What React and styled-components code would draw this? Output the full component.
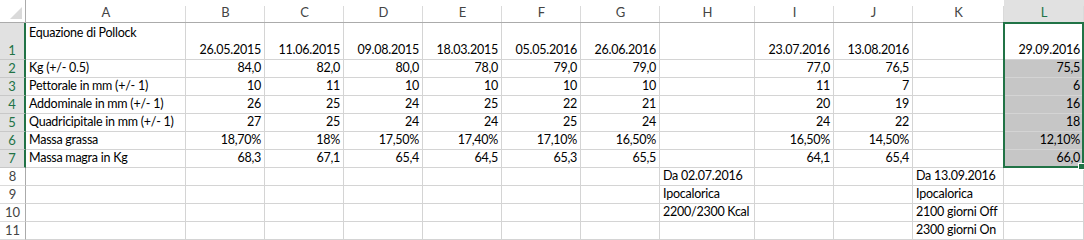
import React from 'react';
import styled, { createGlobalStyle } from 'styled-components';

const GRID = '#d4d4d4';
const HEAD_LINE = '#ababab';
const GREEN = '#217346';

const GlobalStyle = createGlobalStyle`
  *, *::before, *::after { box-sizing: border-box; }
  html, body { margin: 0; padding: 0; background: #fff; }
  body { font-family: Lato, "Liberation Sans", sans-serif; }
`;

const Sheet = styled.div`
  position: relative;
  display: grid;
  grid-template-columns: ${(p) => p.$cols};
  grid-template-rows: ${(p) => p.$rows};
  width: 1084px;
  font-family: Lato, "Liberation Sans", sans-serif;
  font-size: 12.5px;
  letter-spacing: -0.25px;
  color: #000;
  overflow: hidden;
`;

const Corner = styled.div`
  position: relative;
  border-right: 1px solid ${HEAD_LINE};
  border-bottom: 1px solid ${HEAD_LINE};
  &::after {
    content: '';
    position: absolute;
    right: 3px;
    bottom: 3px;
    border-left: 12px solid transparent;
    border-bottom: 12px solid #dadada;
  }
`;

const ColHeader = styled.div`
  position: relative;
  display: flex;
  align-items: center;
  justify-content: center;
  padding-top: 2px;
  font-size: 13px;
  letter-spacing: 0;
  color: ${(p) => (p.$active ? GREEN : '#444')};
  background: ${(p) => (p.$active ? '#e1e1e1' : '#fff')};
  border-bottom: 1px solid ${HEAD_LINE};
  &::after {
    content: '';
    position: absolute;
    right: 0;
    top: 6px;
    bottom: 0;
    width: 1px;
    background: #dadada;
  }
`;

const RowHeader = styled.div`
  display: flex;
  align-items: flex-end;
  justify-content: center;
  padding-bottom: 1px;
  line-height: 16px;
  font-size: 13px;
  letter-spacing: 0;
  color: ${(p) => (p.$active ? GREEN : '#444')};
  background: ${(p) => (p.$active ? '#e1e1e1' : '#fff')};
  border-bottom: 1px solid ${(p) => (p.$active ? '#c8c8c8' : '#dadada')};
  border-right: ${(p) => (p.$active ? `2px solid ${GREEN}` : `1px solid ${HEAD_LINE}`)};
`;

const Cell = styled.div`
  display: flex;
  align-items: ${(p) => (p.$top ? 'flex-start' : 'flex-end')};
  justify-content: ${(p) => (p.$text ? 'flex-start' : 'flex-end')};
  padding: ${(p) => (p.$top ? '2px 3px 0' : '0 3px 1px')};
  line-height: 16px;
  white-space: nowrap;
  border-right: 1px solid ${GRID};
  border-bottom: 1px solid ${GRID};
  background: ${(p) => (p.$selected ? '#c6c6c6' : '#fff')};
`;

/* selection outline around L1:L7, drawn over the cells */
const SelectionFrame = styled.div`
  position: absolute;
  left: 1003px;
  top: 22px;
  width: 81px;
  height: 146px;
  border: 2px solid ${GREEN};
  pointer-events: none;
`;

const FillHandle = styled.div`
  position: absolute;
  left: 1078px;
  top: 163px;
  width: 7px;
  height: 7px;
  background: ${GREEN};
  border: 1px solid #fff;
`;

const columns = [
  { key: 'A', width: 160 },
  { key: 'B', width: 79 },
  { key: 'C', width: 79 },
  { key: 'D', width: 79 },
  { key: 'E', width: 79 },
  { key: 'F', width: 79 },
  { key: 'G', width: 79 },
  { key: 'H', width: 95 },
  { key: 'I', width: 79 },
  { key: 'J', width: 79 },
  { key: 'K', width: 91 },
  { key: 'L', width: 80 },
];

const rows = [
  { h: 37, cells: ['Equazione di Pollock', '26.05.2015', '11.06.2015', '09.08.2015', '18.03.2015', '05.05.2016', '26.06.2016', '', '23.07.2016', '13.08.2016', '', '29.09.2016'] },
  { h: 18, cells: ['Kg (+/- 0.5)', '84,0', '82,0', '80,0', '78,0', '79,0', '79,0', '', '77,0', '76,5', '', '75,5'] },
  { h: 18, cells: ['Pettorale in mm (+/- 1)', '10', '11', '10', '10', '10', '10', '', '11', '7', '', '6'] },
  { h: 18, cells: ['Addominale in mm (+/- 1)', '26', '25', '24', '25', '22', '21', '', '20', '19', '', '16'] },
  { h: 18, cells: ['Quadricipitale in mm (+/- 1)', '27', '25', '24', '24', '25', '24', '', '24', '22', '', '18'] },
  { h: 18, cells: ['Massa grassa', '18,70%', '18%', '17,50%', '17,40%', '17,10%', '16,50%', '', '16,50%', '14,50%', '', '12,10%'] },
  { h: 18, cells: ['Massa magra in Kg', '68,3', '67,1', '65,4', '64,5', '65,3', '65,5', '', '64,1', '65,4', '', '66,0'] },
  { h: 18, cells: ['', '', '', '', '', '', '', 'Da 02.07.2016', '', '', 'Da 13.09.2016', ''] },
  { h: 18, cells: ['', '', '', '', '', '', '', 'Ipocalorica', '', '', 'Ipocalorica', ''] },
  { h: 18, cells: ['', '', '', '', '', '', '', '2200/2300 Kcal', '', '', '2100 giorni Off', ''] },
  { h: 18, cells: ['', '', '', '', '', '', '', '', '', '', '2300 giorni On', ''] },
];

const SELECTED_COL = 11;
const SELECTED_ROWS = 7;

const isText = (v) => /[A-Za-z]/.test(v);

export default function App() {
  const cols = ['26px', ...columns.map((c) => `${c.width}px`)].join(' ');
  const rowSizes = ['23px', ...rows.map((r) => `${r.h}px`)].join(' ');

  return (
    <>
      <GlobalStyle />
      <Sheet $cols={cols} $rows={rowSizes}>
        <Corner />
        {columns.map((c, i) => (
          <ColHeader key={c.key} $active={i === SELECTED_COL}>
            {c.key}
          </ColHeader>
        ))}
        {rows.map((r, ri) => {
          const activeRow = ri < SELECTED_ROWS;
          return (
            <React.Fragment key={ri}>
              <RowHeader $active={activeRow}>{ri + 1}</RowHeader>
              {r.cells.map((v, ci) => (
                <Cell
                  key={ci}
                  $text={isText(v)}
                  $top={ri === 0 && ci === 0}
                  $selected={ci === SELECTED_COL && ri > 0 && ri < SELECTED_ROWS}
                >
                  {v}
                </Cell>
              ))}
            </React.Fragment>
          );
        })}
        <SelectionFrame />
        <FillHandle />
      </Sheet>
    </>
  );
}
